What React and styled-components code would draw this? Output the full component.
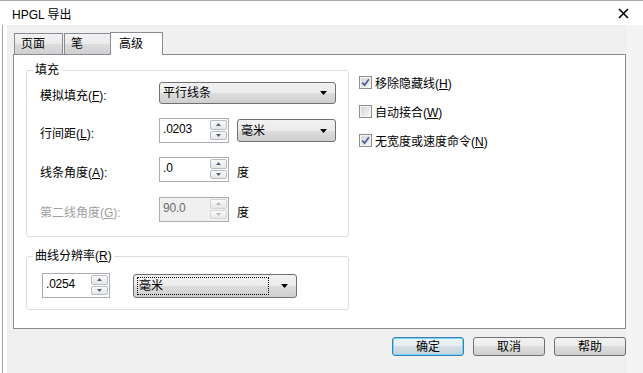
import React from 'react';
import styled, {createGlobalStyle, css} from 'styled-components';

const GlobalStyle = createGlobalStyle`
  html, body {
    margin: 0;
    padding: 0;
    background: #ffffff;
  }
  body {
    font-family: "Liberation Sans", "Noto Sans CJK SC", sans-serif;
    font-size: 12px;
    color: #000;
  }
`;

const Window = styled.div`
  width: 643px;
  height: 373px;
  display: flex;
  flex-direction: column;
  background: #ffffff;
  border-top: 1px solid #a9a9a9;
  box-sizing: border-box;
  overflow: hidden;
`;

const TitleBar = styled.div`
  height: 24px;
  flex: none;
  display: flex;
  align-items: center;
  justify-content: space-between;
  padding: 0 14px 0 12px;
  font-size: 12px;
`;

const Frame = styled.div`
  flex: 1;
  display: flex;
  padding-left: 2px;
`;

const Edge = styled.div`
  width: 4px;
  border-left: 1px solid #a9a9a9;
  background: #ffffff;
`;

const Client = styled.div`
  width: 620px;
  background: #f0f0f0;
  padding: 7px 0 0 6px;
  box-sizing: border-box;
  display: flex;
  flex-direction: column;
`;

const RightEdge = styled.div`
  flex: 1;
  background: #f4f4f4;
`;

const TabStrip = styled.div`
  display: flex;
  align-items: flex-end;
  margin-left: 1px;
  margin-bottom: -1px;
  position: relative;
  z-index: 1;
  height: 23px;
`;

const Tab = styled.div`
  box-sizing: border-box;
  height: 21px;
  margin-bottom: 1px;
  margin-right: 1px;
  padding: 2px 0 0 6px;
  width: ${p => p.$w}px;
  border: 1px solid #898c95;
  border-bottom: none;
  background: linear-gradient(#f2f2f2 0%, #ebebeb 50%, #dddddd 50%, #cfcfcf 100%);
  line-height: 16px;
  ${p => p.$active && css`
    height: 23px;
    margin: 0 0 0 -2px;
    padding: 3px 0 0 8px;
    background: #ffffff;
  `}
`;

const Panel = styled.div`
  width: 613px;
  height: 275px;
  box-sizing: border-box;
  border: 1px solid #898c95;
  background: #ffffff;
  padding: 7px 0 0 12px;
  display: flex;
  gap: 10px;
`;

const LeftCol = styled.div`
  display: flex;
  flex-direction: column;
  gap: 11px;
`;

const Group = styled.fieldset`
  width: 323px;
  box-sizing: border-box;
  margin: 0;
  padding: ${p => p.$pt}px 0 ${p => p.$pb}px 0;
  border: 1px solid #d5dfe5;
  border-radius: 3px;
  min-width: 0;
`;

const Legend = styled.legend`
  margin-left: 6px;
  padding: 0 2px;
  line-height: 16px;
  font-size: 12px;
`;

const GroupBody = styled.div`
  display: flex;
  flex-direction: column;
  padding-left: ${p => p.$pl}px;
`;

const Row = styled.div`
  display: flex;
  align-items: center;
  height: ${p => p.$h}px;
  margin-top: ${p => p.$mt || 0}px;
  gap: ${p => p.$gap || 8}px;
`;

const Label = styled.div`
  width: 111px;
  padding-top: 3px;
  color: ${p => (p.$disabled ? '#a0a0a0' : '#000')};
`;

const Combo = styled.div`
  box-sizing: border-box;
  width: ${p => p.$w}px;
  height: ${p => p.$h || 23}px;
  border: 1px solid #707070;
  border-radius: 3px;
  background: linear-gradient(#f2f2f2 0%, #ebebeb 50%, #dddddd 50%, #cfcfcf 100%);
  display: flex;
  align-items: center;
  justify-content: space-between;
  padding: 0 8px 0 3px;
  line-height: 16px;
`;

const FocusText = styled.span`
  flex: 1;
  margin-right: 12px;
  border: 1px dotted #000;
  padding: 1px 0 0 1px;
  line-height: 15px;
`;

const SpinBox = styled.div`
  box-sizing: border-box;
  width: ${p => p.$w}px;
  height: 25px;
  border: 1px solid #abadb3;
  background: ${p => (p.$disabled ? '#f0f0f0' : '#ffffff')};
  color: ${p => (p.$disabled ? '#6d6d6d' : '#000')};
  display: flex;
  padding: 1px 1px 1px 3px;
`;

const SpinText = styled.div`
  flex: 1;
  padding-top: 2px;
  line-height: 14px;
  letter-spacing: -0.2px;
`;

const SpinButtons = styled.div`
  width: 17px;
  display: flex;
  flex-direction: column;
  gap: 1px;
  padding-bottom: 1px;
`;

const SpinButton = styled.div`
  flex: 1;
  box-sizing: border-box;
  border: 1px solid ${p => (p.$disabled ? '#d5d5d5' : '#b9bcc2')};
  border-radius: 2px;
  background: linear-gradient(#fbfbfb, #e6e6e6);
  display: flex;
  align-items: center;
  justify-content: center;
`;

const Unit = styled.div`
  padding-top: 3px;
`;

const RightCol = styled.div`
  padding-top: 12px;
  display: flex;
  flex-direction: column;
  gap: 13px;
`;

const CheckRow = styled.div`
  display: flex;
  align-items: center;
  gap: 3px;
  height: 16px;
`;

const CheckBox = styled.div`
  width: 13px;
  height: 13px;
  box-sizing: border-box;
  border: 1px solid #8e8f8f;
  background: linear-gradient(135deg, #d2d4d8, #f7f7f7);
  box-shadow: inset 0 0 0 1px #f4f4f4;
  display: flex;
  align-items: center;
  justify-content: center;
`;

const ButtonBar = styled.div`
  display: flex;
  justify-content: flex-end;
  gap: 9px;
  width: 613px;
  margin-top: 8px;
`;

const Button = styled.div`
  box-sizing: border-box;
  width: 72px;
  height: 19px;
  border: 1px solid #707070;
  border-radius: 3px;
  background: linear-gradient(#f2f2f2 0%, #ebebeb 50%, #dddddd 50%, #cfcfcf 100%);
  display: flex;
  align-items: center;
  justify-content: center;
  line-height: 16px;
  ${p => p.$default && css`
    border-color: #3c7fb1;
    box-shadow: inset 0 0 0 1px #6fd6f6;
    background: linear-gradient(#eef4f8 0%, #e4ecf1 50%, #d4dfe6 50%, #c6d3dc 100%);
  `}
`;

const Arrow = () => (
  <svg width="7" height="4" viewBox="0 0 7 4"><path d="M0 0H7L3.5 4Z" fill="#000" /></svg>
);

const SpinArrow = ({up, disabled}) => (
  <svg width="5" height="3" viewBox="0 0 5 3">
    <path d={up ? 'M0 3H5L2.5 0Z' : 'M0 0H5L2.5 3Z'} fill={disabled ? '#b4bac6' : '#4d6185'} />
  </svg>
);

const Check = () => (
  <svg width="9" height="9" viewBox="0 0 9 9">
    <path d="M1.2 4.6L3.6 7.2L7.9 1.2" fill="none" stroke="#4a5f97" strokeWidth="1.7" />
  </svg>
);

function Spin({value, w = 70, disabled}) {
  return (
    <SpinBox $w={w} $disabled={disabled}>
      <SpinText>{value}</SpinText>
      <SpinButtons>
        <SpinButton $disabled={disabled}><SpinArrow up disabled={disabled} /></SpinButton>
        <SpinButton $disabled={disabled}><SpinArrow disabled={disabled} /></SpinButton>
      </SpinButtons>
    </SpinBox>
  );
}

const checks = [
  {text: '移除隐藏线', key: 'H', on: true},
  {text: '自动接合', key: 'W', on: false},
  {text: '无宽度或速度命令', key: 'N', on: true},
];

export default function App() {
  return (
    <>
      <GlobalStyle />
      <Window>
        <TitleBar>
          <span>HPGL 导出</span>
          <svg width="11" height="11" viewBox="0 0 11 11">
            <path d="M1 1L10 10M10 1L1 10" stroke="#000" strokeWidth="1.6" />
          </svg>
        </TitleBar>
        <Frame>
          <Edge />
          <Client>
            <TabStrip>
              <Tab $w={49}>页面</Tab>
              <Tab $w={47}>笔</Tab>
              <Tab $w={53} $active>高级</Tab>
            </TabStrip>
            <Panel>
              <LeftCol>
                <Group $pt={4} $pb={14}>
                  <Legend>填充</Legend>
                  <GroupBody $pl={13}>
                    <Row $h={22}>
                      <Label>模拟填充(<u>F</u>):</Label>
                      <Combo $w={177} $h={22}><span>平行线条</span><Arrow /></Combo>
                    </Row>
                    <Row $h={25} $mt={14}>
                      <Label>行间距(<u>L</u>):</Label>
                      <Spin value=".0203" />
                      <Combo $w={99}><span>毫米</span><Arrow /></Combo>
                    </Row>
                    <Row $h={25} $mt={14}>
                      <Label>线条角度(<u>A</u>):</Label>
                      <Spin value=".0" />
                      <Unit>度</Unit>
                    </Row>
                    <Row $h={25} $mt={15}>
                      <Label $disabled>第二线角度(<u>G</u>):</Label>
                      <Spin value="90.0" disabled />
                      <Unit>度</Unit>
                    </Row>
                  </GroupBody>
                </Group>
                <Group $pt={9} $pb={11}>
                  <Legend>曲线分辨率(<u>R</u>)</Legend>
                  <GroupBody $pl={15}>
                    <Row $h={25} $gap={23}>
                      <Spin value=".0254" w={68} />
                      <Combo $w={164} $h={24}><FocusText>毫米</FocusText><Arrow /></Combo>
                    </Row>
                  </GroupBody>
                </Group>
              </LeftCol>
              <RightCol>
                {checks.map(c => (
                  <CheckRow key={c.key}>
                    <CheckBox>{c.on && <Check />}</CheckBox>
                    <span>{c.text}(<u>{c.key}</u>)</span>
                  </CheckRow>
                ))}
              </RightCol>
            </Panel>
            <ButtonBar>
              <Button $default>确定</Button>
              <Button>取消</Button>
              <Button>帮助</Button>
            </ButtonBar>
          </Client>
          <RightEdge />
        </Frame>
      </Window>
    </>
  );
}
